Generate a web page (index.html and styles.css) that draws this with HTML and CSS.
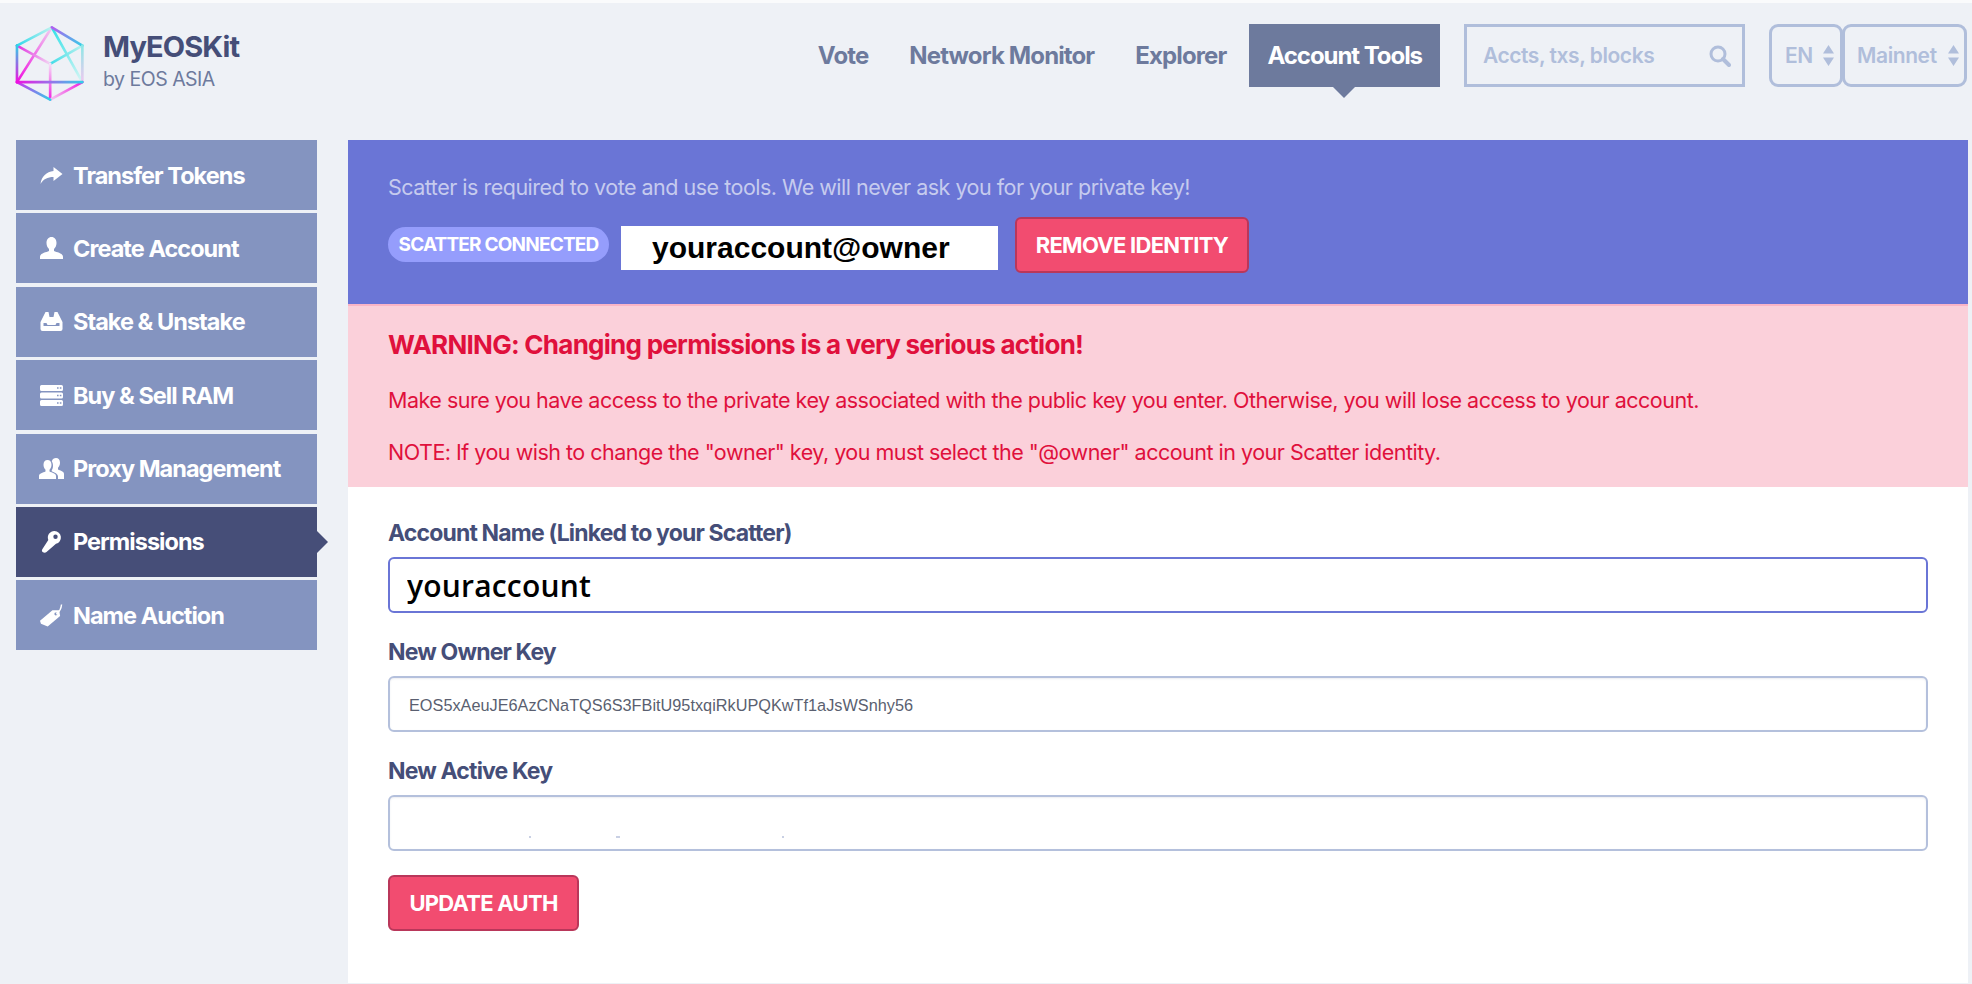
FILE: index.html
```html
<!DOCTYPE html>
<html lang="en">
<head>
    <meta charset="UTF-8">
    <meta name="viewport" content="width=device-width, initial-scale=1.0">
    <title>MyEOSKit - Permissions</title>
    <link rel="stylesheet" href="styles.css">
</head>
<body>
    <header class="topbar">
        <a class="brand" href="#">
            <svg class="logo" viewBox="40 70 215 238" fill="none" stroke-width="8" stroke-linecap="round">
                <defs>
                    <linearGradient id="g1" gradientUnits="userSpaceOnUse" x1="48" y1="135" x2="153" y2="80"><stop offset="0" stop-color="#2fd9ea"/><stop offset="1" stop-color="#bff3ef"/></linearGradient>
                    <linearGradient id="g2" gradientUnits="userSpaceOnUse" x1="153" y1="80" x2="245" y2="135"><stop offset="0" stop-color="#b45cf0"/><stop offset="1" stop-color="#33cfe8"/></linearGradient>
                    <linearGradient id="g3" gradientUnits="userSpaceOnUse" x1="245" y1="135" x2="245" y2="245"><stop offset="0" stop-color="#8ce8e6"/><stop offset="1" stop-color="#f0c8f0"/></linearGradient>
                    <linearGradient id="g4" gradientUnits="userSpaceOnUse" x1="245" y1="245" x2="148" y2="298"><stop offset="0" stop-color="#f020e0"/><stop offset="1" stop-color="#f3c8f0"/></linearGradient>
                    <linearGradient id="g5" gradientUnits="userSpaceOnUse" x1="48" y1="245" x2="148" y2="298"><stop offset="0" stop-color="#d030ee"/><stop offset="1" stop-color="#30cfe8"/></linearGradient>
                    <linearGradient id="g6" gradientUnits="userSpaceOnUse" x1="48" y1="135" x2="48" y2="245"><stop offset="0" stop-color="#30cfe8"/><stop offset="1" stop-color="#f010e0"/></linearGradient>
                    <linearGradient id="g7" gradientUnits="userSpaceOnUse" x1="48" y1="245" x2="245" y2="245"><stop offset="0" stop-color="#f010e0"/><stop offset="0.5" stop-color="#9a70ea"/><stop offset="1" stop-color="#30d0e8"/></linearGradient>
                    <linearGradient id="g8" gradientUnits="userSpaceOnUse" x1="48" y1="245" x2="153" y2="80"><stop offset="0" stop-color="#f010e0"/><stop offset="1" stop-color="#f0d0f0"/></linearGradient>
                    <linearGradient id="g9" gradientUnits="userSpaceOnUse" x1="153" y1="80" x2="245" y2="245"><stop offset="0" stop-color="#30e0e8"/><stop offset="1" stop-color="#d8f6f4"/></linearGradient>
                    <linearGradient id="g10" gradientUnits="userSpaceOnUse" x1="148" y1="190" x2="245" y2="135"><stop offset="0" stop-color="#40dce8"/><stop offset="1" stop-color="#b8f2ee"/></linearGradient>
                    <linearGradient id="g11" gradientUnits="userSpaceOnUse" x1="48" y1="135" x2="148" y2="190"><stop offset="0" stop-color="#e030e0"/><stop offset="1" stop-color="#f3d6f3"/></linearGradient>
                    <linearGradient id="g12" gradientUnits="userSpaceOnUse" x1="148" y1="190" x2="148" y2="298"><stop offset="0" stop-color="#f6e0f6"/><stop offset="1" stop-color="#f020e0"/></linearGradient>
                </defs>
                <path stroke="url(#g8)" d="M48 245 153 80"/>
                <path stroke="url(#g9)" d="M153 80 245 245"/>
                <path stroke="url(#g11)" d="M48 135 148 190"/>
                <path stroke="url(#g10)" d="M148 190 245 135"/>
                <path stroke="url(#g12)" d="M148 190V298"/>
                <path stroke="url(#g1)" d="M48 135 153 80"/>
                <path stroke="url(#g2)" d="M153 80 245 135"/>
                <path stroke="url(#g3)" d="M245 135V245"/>
                <path stroke="url(#g4)" d="M245 245 148 298"/>
                <path stroke="url(#g5)" d="M48 245 148 298"/>
                <path stroke="url(#g6)" d="M48 135V245"/>
                <path stroke="url(#g7)" d="M48 245H245"/>
            </svg>
            <span class="brand-text">
                <strong>MyEOSKit</strong>
                <small>by EOS ASIA</small>
            </span>
        </a>

        <nav class="nav">
            <a href="#">Vote</a>
            <a href="#">Network Monitor</a>
            <a href="#">Explorer</a>
            <a class="active" href="#">Account Tools</a>
        </nav>

        <div class="search">
            <input type="text" placeholder="Accts, txs, blocks">
            <svg viewBox="0 0 22 22" width="22" height="22" fill="none" stroke="#b0bedb">
                <circle cx="9" cy="9" r="7" stroke-width="3"/>
                <path d="M14 14l6 6" stroke-width="4" stroke-linecap="round"/>
            </svg>
        </div>

        <div class="select select-lang">
            EN
            <svg viewBox="0 0 11 21" width="11" height="21" fill="#b0bedb"><path d="M5.5 0 11 8.500H0zM0 12.500h11L5.500 21z"/></svg>
        </div>
        <div class="select select-net">
            Mainnet
            <svg viewBox="0 0 11 21" width="11" height="21" fill="#b0bedb"><path d="M5.5 0 11 8.500H0zM0 12.500h11L5.500 21z"/></svg>
        </div>
    </header>

    <div class="layout">
        <aside class="sidebar">
            <a href="#">
                <svg viewBox="0 0 22 17" height="17" fill="#fff"><path d="M13 0l9 7-9 7v-4C7 10 3 12 0 17 1 9 6 5 13 4z"/></svg>
                Transfer Tokens
            </a>
            <a href="#">
                <svg viewBox="0 0 23 22" height="22" fill="#fff"><path d="M11.500 0c3 0 5 2.500 5 6 0 2.500-1 4.500-2.500 6v2c3 1.500 9 2 9 6v2H0v-2c0-4 6-4.500 9-6v-2C7.500 10.500 6.500 8.500 6.500 6c0-3.500 2-6 5-6z"/></svg>
                Create Account
            </a>
            <a href="#">
                <svg viewBox="0 0 22 19" height="19" fill="#fff" fill-rule="evenodd"><path d="M5 0h3l1 5h4l1-5h3l5 10v7a2 2 0 0 1-2 2H2a2 2 0 0 1-2-2v-7zM3 11v3h16v-3h-3l-1 2H7l-1-2z"/></svg>
                Stake &amp; Unstake
            </a>
            <a href="#">
                <svg viewBox="0 0 23 21" height="21" fill="#fff" fill-rule="evenodd"><path d="M1.500 0h20A1.500 1.500 0 0 1 23 1.500v3A1.500 1.500 0 0 1 21.500 6h-20A1.500 1.500 0 0 1 0 4.500v-3A1.500 1.500 0 0 1 1.500 0zM17 2.300v1.400h1.600V2.300zM19.800 2.300v1.400h1.600V2.300zM1.500 7.500h20A1.500 1.500 0 0 1 23 9v3a1.500 1.500 0 0 1-1.500 1.500h-20A1.500 1.500 0 0 1 0 12V9a1.500 1.500 0 0 1 1.500-1.500zM17 9.800v1.400h1.600V9.800zM19.800 9.800v1.400h1.600V9.800zM1.500 15h20a1.500 1.500 0 0 1 1.500 1.500v3a1.500 1.500 0 0 1-1.500 1.500h-20A1.500 1.500 0 0 1 0 19.500v-3A1.500 1.500 0 0 1 1.500 15zM17 17.300v1.400h1.600v-1.400zM19.800 17.300v1.400h1.600v-1.400z"/></svg>
                Buy &amp; Sell RAM
            </a>
            <a href="#">
                <svg viewBox="1 0 23 21" height="21" fill="#fff"><path d="M8.500 2c2.500 0 4 2 4 4.800 0 2-.8 3.700-2 5v1.700c2.500 1.200 6.500 1.800 6.500 4.500v3H0v-3c0-2.700 4-3.300 6.500-4.500v-1.700c-1.200-1.300-2-3-2-5C4.500 4 6 2 8.500 2z"/><path d="M17 0c2.500 0 4 2 4 4.800 0 2-.8 3.700-2 5v1.700c2.500 1.200 6 1.800 6 4.500v5h-6v-2.500c0-3-3.500-4-6.300-5.300v-.7c.9-1.500 1.300-3 1.300-4.700 0-1.800-.5-3.300-1.200-4.500C13.500 1.100 15 0 17 0z"/></svg>
                Proxy Management
            </a>
            <a class="active" href="#">
                <svg viewBox="0 0 20 22" height="22" fill="#fff" fill-rule="evenodd"><path d="M13 0a6.500 6.500 0 0 1 1.500 12.800L5 21c-1 1-2.500 1-3.500.3S0 19.500.8 18.200l6-9.200A6.500 6.500 0 0 1 13 0zm1 3.500a2.200 2.200 0 1 0 0 4.400 2.200 2.200 0 0 0 0-4.400z"/></svg>
                Permissions
            </a>
            <a href="#">
                <svg viewBox="0 0 24 24" height="24" fill="#fff" fill-rule="evenodd"><path d="M13 7h7l1 6L8 24l-7-3-1-3zM16.500 9.500a1.500 1.500 0 1 0 0 3 1.500 1.500 0 0 0 0-3z"/><path d="M17 11c3-2 5-5 5.500-10" fill="none" stroke="#fff" stroke-width="1.500"/></svg>
                Name Auction
            </a>
        </aside>

        <main class="content">
            <section class="scatter">
                <p>Scatter is required to vote and use tools. We will never ask you for your private key!</p>
                <div class="scatter-row">
                    <span class="pill">SCATTER CONNECTED</span>
                    <span class="identity">youraccount@owner</span>
                    <button class="btn">REMOVE IDENTITY</button>
                </div>
            </section>

            <section class="warning">
                <h2>WARNING: Changing permissions is a very serious action!</h2>
                <p>Make sure you have access to the private key associated with the public key you enter. Otherwise, you will lose access to your account.</p>
                <p>NOTE: If you wish to change the "owner" key, you must select the "@owner" account in your Scatter identity.</p>
            </section>

            <form class="form">
                <label for="account">Account Name (Linked to your Scatter)</label>
                <input id="account" class="field field-account" type="text" value="youraccount">

                <label for="owner">New Owner Key</label>
                <input id="owner" class="field" type="text" value="EOS5xAeuJE6AzCNaTQS6S3FBitU95txqiRkUPQKwTf1aJsWSnhy56">

                <label for="active">New Active Key</label>
                <input id="active" class="field field-specks" type="text">

                <button class="btn btn-update" type="button">UPDATE AUTH</button>
            </form>
        </main>
    </div>
</body>
</html>
```

FILE: styles.css
```css
* {
    margin: 0;
    padding: 0;
    box-sizing: border-box;
}

body {
    font-family: Inter, "Liberation Sans", sans-serif;
    background: #eef1f6;
    border-top: 3px solid #fafbfc;
    color: #454e78;
    height: 984px;
    overflow: hidden;
}

a {
    text-decoration: none;
    color: inherit;
}

/* top bar */
.topbar {
    display: flex;
    align-items: flex-start;
    height: 137px;
    padding: 21px 5px 0 14px;
}

.brand {
    display: flex;
    gap: 17px;
}

.logo {
    width: 72px;
    height: 79px;
}

.brand-text {
    display: flex;
    flex-direction: column;
    padding-top: 6px;
}

.brand-text strong {
    font-size: 29px;
    line-height: 34px;
    font-weight: 700;
    letter-spacing: -0.9px;
    color: #454e78;
}

.brand-text small {
    font-size: 19.500px;
    line-height: 30px;
    color: #6d7a9d;
    letter-spacing: -0.5px;
}

.nav {
    display: flex;
    gap: 5px;
    margin-left: auto;
}

.nav a {
    position: relative;
    height: 63px;
    padding: 0 18px;
    font-size: 24px;
    font-weight: 700;
    line-height: 63px;
    letter-spacing: -0.87px;
    color: #6d7a9d;
}

.nav a.active {
    background: #6d7a9d;
    color: #fff;
    letter-spacing: -1.05px;
}

.nav a.active::after {
    content: "";
    position: absolute;
    left: 84px;
    top: 63px;
    border-left: 11px solid transparent;
    border-right: 11px solid transparent;
    border-top: 11px solid #6d7a9d;
}

.search {
    display: flex;
    align-items: center;
    width: 281px;
    height: 63px;
    margin-left: 24px;
    padding: 0 11px 0 16px;
    border: 3px solid #b0bedb;
}

.search input {
    flex: 1;
    min-width: 0;
    border: none;
    outline: none;
    background: transparent;
    font-family: inherit;
    font-size: 21px;
    font-weight: 600;
    letter-spacing: -0.45px;
    color: #b0bedb;
}

.search input::placeholder {
    color: #b0bedb;
    opacity: 1;
}

.select {
    display: flex;
    align-items: center;
    justify-content: space-between;
    height: 63px;
    border: 3px solid #b0bedb;
    border-radius: 9px;
    font-size: 21px;
    font-weight: 600;
    letter-spacing: -0.4px;
    color: #b0bedb;
}

.select-lang {
    width: 74px;
    margin-left: 24px;
    padding: 0 6px 0 13px;
}

.select-net {
    width: 125px;
    margin-left: -1px;
    padding: 0 5px 0 12px;
}

/* page body */
.layout {
    display: flex;
    gap: 31px;
    height: 843px;
    padding: 0 4px 0 16px;
}

.sidebar {
    display: flex;
    flex-direction: column;
    gap: 3.4px;
    flex: none;
    width: 301px;
}

.sidebar a {
    position: relative;
    display: flex;
    align-items: center;
    height: 70px;
    padding-left: 24px;
    background: #8494c0;
    color: #fff;
    font-size: 23.500px;
    font-weight: 700;
    letter-spacing: -0.97px;
}

.sidebar a svg {
    flex: none;
    width: 23px;
    margin-right: 10px;
    overflow: visible;
}

.sidebar a.active {
    background: #464e78;
}

.sidebar a.active::after {
    content: "";
    position: absolute;
    left: 100%;
    top: 24px;
    border-top: 11px solid transparent;
    border-bottom: 11px solid transparent;
    border-left: 11px solid #464e78;
}

.content {
    flex: 1;
    display: flex;
    flex-direction: column;
    background: #fff;
    height: 843px;
}

.scatter {
    height: 164px;
    padding: 32px 40px 0;
    background: #6a75d6;
}

.scatter p {
    font-size: 21.500px;
    line-height: 30px;
    letter-spacing: -0.5px;
    color: #c6cbee;
}

.scatter-row {
    display: flex;
    align-items: flex-start;
    margin-top: 15px;
}

.pill {
    margin-top: 10px;
    width: 221px;
    height: 35px;
    border-radius: 18px;
    background: #959dfc;
    color: #fff;
    font-size: 19px;
    font-weight: 700;
    line-height: 35px;
    letter-spacing: -0.8px;
    text-align: center;
}

.identity {
    margin: 9px 17px 0 12px;
    width: 377px;
    height: 44px;
    padding-left: 31px;
    background: #fff;
    color: #000;
    font-family: "Liberation Sans", Arial, sans-serif;
    font-size: 30px;
    font-weight: 700;
    line-height: 44px;
}

.btn {
    width: 234px;
    height: 56px;
    border: 2px solid #b9375a;
    border-radius: 6px;
    background: #f24c70;
    color: #fff;
    font-family: inherit;
    font-size: 22px;
    font-weight: 700;
    letter-spacing: -0.73px;
}

.warning {
    height: 183px;
    padding: 24px 40px 0;
    border-top: 2px solid #f9b4c6;
    background: #fbd0da;
    color: #e0103c;
}

.warning h2 {
    font-size: 26px;
    font-weight: 700;
    line-height: 30px;
    letter-spacing: -0.73px;
}

.warning p {
    margin-top: 25px;
    font-size: 21.500px;
    line-height: 30px;
    letter-spacing: -0.5px;
}

.warning p + p {
    margin-top: 22px;
}

.form {
    display: flex;
    flex-direction: column;
    align-items: flex-start;
    padding: 7px 40px 0;
}

.form label {
    margin-top: 24px;
    margin-bottom: 9px;
    font-size: 23px;
    font-weight: 700;
    line-height: 30px;
    letter-spacing: -0.84px;
    color: #454e78;
}

.field {
    width: 100%;
    height: 56px;
    padding: 3px 19px 0;
    border: 2px solid #b4c0dc;
    border-radius: 6px;
    outline: none;
    box-shadow: inset 0 1px 2px rgba(69, 78, 120, 0.1);
    font-family: "Liberation Sans", Arial, sans-serif;
    font-size: 16.300px;
    color: #5a5f70;
}

.field-account {
    padding: 0 17px;
    border-color: #6a75d6;
    box-shadow: none;
    font-family: "Open Sans", sans-serif;
    font-size: 30px;
    font-weight: 600;
    letter-spacing: 0.2px;
    color: #000;
}

/* leftover pixels of a covered key in the source picture */
.field-specks {
    background:
        linear-gradient(#c9d0e4, #c9d0e4) 139px 39px / 2px 2px no-repeat,
        linear-gradient(#c9d0e4, #c9d0e4) 226px 39px / 4px 2px no-repeat,
        linear-gradient(#c9d0e4, #c9d0e4) 392px 39px / 2px 2px no-repeat,
        #fff;
}

.btn-update {
    width: 191px;
    margin-top: 24px;
}
```
